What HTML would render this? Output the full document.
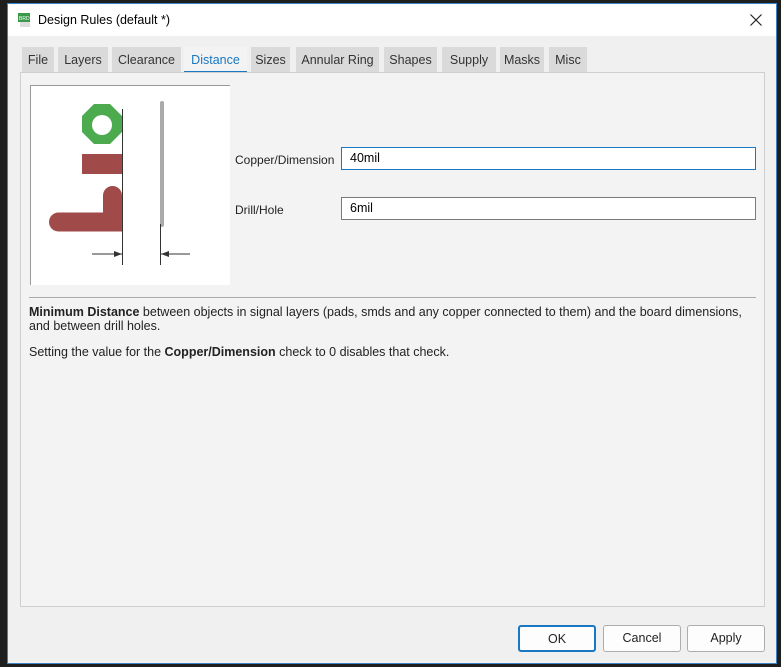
<!DOCTYPE html>
<html><head><style>
*{margin:0;padding:0;box-sizing:border-box}
body{width:781px;height:667px;background:#1e1e1e;font-family:"Liberation Sans",sans-serif;font-size:12px;color:#000;position:relative;overflow:hidden}
.dlg{position:absolute;left:7px;top:3px;width:770px;height:661px;background:#f0f0f0;border:1px solid #3b84c4}
.title{position:absolute;left:0;top:0;width:100%;height:32px;background:#fff}
.tab{position:absolute;top:43px;height:26px;background:#dadada;color:#333;line-height:26px;text-align:center;font-size:12.5px}
.panel{position:absolute;left:12px;top:68px;width:745px;height:535px;background:#f3f3f3;border:1px solid #cfcfcf}
.inp{position:absolute;height:23px;background:#fff;border:1px solid #7a7a7a;padding-left:8px;line-height:21px;font-size:12.5px}
.btn{position:absolute;top:621px;width:78px;height:27px;border:1px solid #adadad;background:#fdfdfd;border-radius:3px;text-align:center;line-height:25px;font-size:12.5px;color:#222}
</style></head><body>
<div class="dlg">
 <div class="title">
  <svg style="position:absolute;left:9px;top:8px" width="16" height="16"><rect x="1" y="1" width="12" height="9" fill="#3a9a4a"/><text x="2" y="8" font-size="5" fill="#fff" font-family="Liberation Sans">BRD</text><rect x="3" y="10" width="10" height="5" fill="#ddd"/></svg>
  <div style="position:absolute;left:30px;top:9px;font-size:12.5px">Design Rules (default *)</div>
  <svg style="position:absolute;left:742px;top:10px" width="12" height="12"><path d="M0.5 0.5L11.5 11.5M11.5 0.5L0.5 11.5" stroke="#222" stroke-width="1.2"/></svg>
 </div>
 <div class="tab" style="left:14px;width:32px">File</div>
 <div class="tab" style="left:50px;width:50px">Layers</div>
 <div class="tab" style="left:104px;width:69px">Clearance</div>
 <div class="tab" style="left:176px;width:63px;background:#f3f3f3;color:#1a78c2;border-bottom:2px solid #1a78c2">Distance</div>
 <div class="tab" style="left:243px;width:39px">Sizes</div>
 <div class="tab" style="left:288px;width:83px">Annular Ring</div>
 <div class="tab" style="left:376px;width:53px">Shapes</div>
 <div class="tab" style="left:434px;width:54px">Supply</div>
 <div class="tab" style="left:492px;width:44px">Masks</div>
 <div class="tab" style="left:541px;width:38px">Misc</div>
 <div class="panel">
  <svg style="position:absolute;left:9px;top:12px" width="200" height="200">
   <defs><clipPath id="c"><rect x="0" y="0" width="92" height="200"/></clipPath></defs>
   <rect x="0" y="0" width="200" height="200" fill="#fff"/>
   <path d="M0.5 200V0.5H200" stroke="#999" fill="none"/>
   <polygon points="64,19 80,19 92,31 92,47 80,59 64,59 52,47 52,31" fill="#4caa4f"/>
   <circle cx="72" cy="40" r="10" fill="#fff"/>
   <rect x="52" y="69" width="40" height="20" fill="#a04a4a"/>
   <g clip-path="url(#c)"><path d="M82.5 110.5V137M28.5 137H100" stroke="#a04a4a" stroke-width="19" stroke-linecap="round" fill="none"/></g>
   <line x1="92.5" y1="24" x2="92.5" y2="180" stroke="#333"/>
   <line x1="132" y1="18" x2="132" y2="140" stroke="#aaa" stroke-width="4" stroke-linecap="round"/>
   <line x1="130.5" y1="139" x2="130.5" y2="180" stroke="#333"/>
   <line x1="62" y1="169" x2="92" y2="169" stroke="#333"/><polygon points="92,169 84,166 84,172" fill="#333"/>
   <line x1="131" y1="169" x2="160" y2="169" stroke="#333"/><polygon points="131,169 139,166 139,172" fill="#333"/>
  </svg>
  <div style="position:absolute;left:214px;top:80px;font-size:12px;color:#222">Copper/Dimension</div>
  <div class="inp" style="left:320px;top:74px;width:415px;border-color:#1a78c2">40mil</div>
  <div style="position:absolute;left:214px;top:130px;font-size:12px;color:#222">Drill/Hole</div>
  <div class="inp" style="left:320px;top:124px;width:415px">6mil</div>
  <div style="position:absolute;left:8px;top:224px;width:727px;border-top:1px solid #aaa"></div>
  <div style="position:absolute;left:8px;top:232px;width:730px;font-size:12.5px;line-height:14px;color:#222"><b>Minimum Distance</b> between objects in signal layers (pads, smds and any copper connected to them) and the board dimensions, and between drill holes.</div>
  <div style="position:absolute;left:8px;top:272px;font-size:12.5px;color:#222">Setting the value for the <b>Copper/Dimension</b> check to 0 disables that check.</div>
 </div>
 <div class="btn" style="left:510px;border:2px solid #1a78c2">OK</div>
 <div class="btn" style="left:595px">Cancel</div>
 <div class="btn" style="left:679px">Apply</div>
</div>
</body></html>
